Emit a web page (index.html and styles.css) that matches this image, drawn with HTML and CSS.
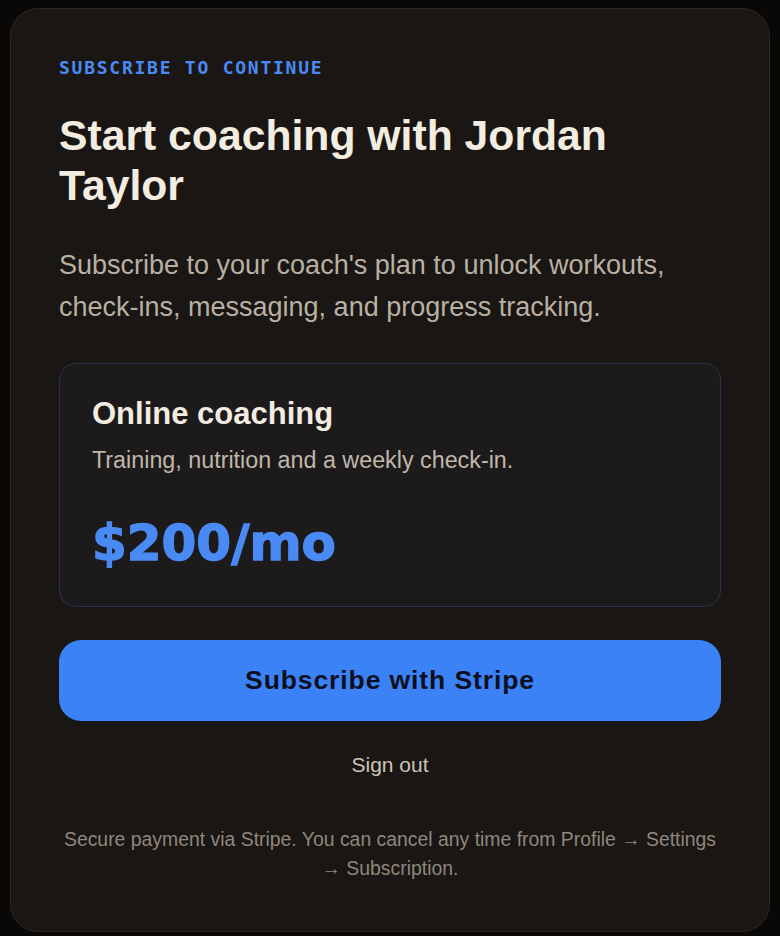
FILE: index.html
```html
<!DOCTYPE html>
<html lang="en">
<head>
<meta charset="utf-8">
<title>Subscribe to continue</title>
<link rel="stylesheet" href="styles.css">
</head>
<body>
<main class="card">
  <p class="eyebrow">SUBSCRIBE TO CONTINUE</p>
  <h1 class="title">Start coaching with Jordan Taylor</h1>
  <p class="lead">Subscribe to your coach's plan to unlock workouts, check-ins, messaging, and progress tracking.</p>
  <section class="plan">
    <h2 class="plan-name">Online coaching</h2>
    <p class="plan-desc">Training, nutrition and a weekly check-in.</p>
    <p class="plan-price">$200/mo</p>
  </section>
  <button class="cta" type="button">Subscribe with Stripe</button>
  <button class="signout" type="button">Sign out</button>
  <p class="note">Secure payment via Stripe. You can cancel any time from Profile → Settings → Subscription.</p>
</main>
</body>
</html>
```
FILE: styles.css
```css
html, body {
  margin: 0;
  background: #0a0807;
}
body {
  padding: 8px 10px;
  font-family: "Liberation Sans", Arial, sans-serif;
}
.card {
  display: block;
  background: #1a1613;
  border: 1px solid #2c2824;
  border-radius: 28px;
  padding: 48px;
}
.eyebrow {
  margin: 0;
  font-family: "DejaVu Sans Mono", "Liberation Mono", monospace;
  font-weight: 700;
  font-size: 18px;
  line-height: 21px;
  letter-spacing: 1.75px;
  color: #4a8af4;
}
.title {
  margin: 32px 0 0;
  font-size: 42.7px;
  line-height: 50px;
  font-weight: 700;
  color: #f3ece1;
}
.lead {
  margin: 34px 0 0;
  font-size: 27px;
  line-height: 42px;
  color: #b9b0a4;
}
.plan {
  margin-top: 35px;
  background: #1c1a1b;
  border: 1px solid #29344c;
  border-radius: 16px;
  padding: 32px 32px 33px;
}
.plan-name {
  margin: 0;
  font-size: 31px;
  line-height: 36px;
  font-weight: 700;
  color: #f3ece1;
}
.plan-desc {
  margin: 12px 0 0;
  font-size: 23.3px;
  line-height: 32px;
  color: #c0b7aa;
}
.plan-price {
  margin: 37px 0 0;
  font-family: "DejaVu Sans", "Liberation Sans", sans-serif;
  font-weight: 700;
  font-size: 50px;
  line-height: 60px;
  color: #4a8af4;
  -webkit-text-stroke: 1.4px #4a8af4;
}
.cta {
  display: block;
  width: 100%;
  margin-top: 33px;
  padding: 25px 0;
  border: 0;
  border-radius: 22px;
  background: #3b82f6;
  color: #0b1020;
  font-family: "Liberation Sans", Arial, sans-serif;
  font-weight: 700;
  font-size: 26.5px;
  line-height: 31px;
  letter-spacing: 0.9px;
  text-align: center;
}
.signout {
  display: block;
  margin: 28px auto 0;
  padding: 0;
  border: 0;
  background: none;
  color: #cdc4b7;
  font-family: "Liberation Sans", Arial, sans-serif;
  font-size: 21px;
  line-height: 32px;
}
.note {
  margin: 44px 0 0;
  text-align: center;
  font-size: 19.4px;
  line-height: 29px;
  color: #8f877d;
}
```
